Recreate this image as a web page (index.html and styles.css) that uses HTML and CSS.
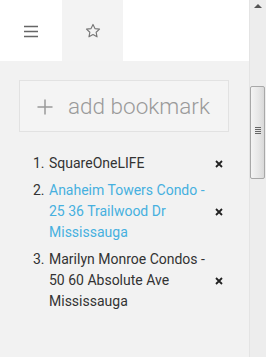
FILE: index.html
```html
<!DOCTYPE html>
<html>
<head>
<meta charset="utf-8">
<link rel="stylesheet" href="styles.css">
</head>
<body>
<div class="frame">
  <div class="main">
    <div class="tabs">
      <div class="tab tab-menu">
        <svg width="16" height="14" viewBox="0 0 16 14"><path d="M1 2.5H15M1 7.5H15M1 12.5H15" stroke="#666" stroke-width="1.6" fill="none"/></svg>
      </div>
      <div class="tab tab-star">
        <svg width="18" height="18" viewBox="0 0 24 24"><path d="M12 3.2l2.6 5.6 6.1.7-4.5 4.2 1.2 6.1L12 16.8l-5.4 3 1.2-6.1-4.5-4.2 6.1-.7z" stroke="#777" stroke-width="1.5" fill="none" stroke-linejoin="round"/></svg>
      </div>
      <div class="tab-rest"></div>
    </div>
    <div class="content">
      <div class="add-btn"><span class="plus"><svg width="16" height="16" viewBox="0 0 16 16"><path d="M8 0.5V15.5M0.5 8H15.5" stroke="#999" stroke-width="1.5"/></svg></span><span class="add-label">add bookmark</span></div>
      <ol class="list">
        <li class="item"><span class="num">1.</span><span class="title">SquareOneLIFE</span><span class="del"><svg width="8" height="8" viewBox="0 0 8 8"><path d="M1 1L7 7M7 1L1 7" stroke="#222" stroke-width="1.8"/></svg></span></li>
        <li class="item"><span class="num">2.</span><span class="title link">Anaheim Towers Condo - 25 36 Trailwood Dr Mississauga</span><span class="del"><svg width="8" height="8" viewBox="0 0 8 8"><path d="M1 1L7 7M7 1L1 7" stroke="#222" stroke-width="1.8"/></svg></span></li>
        <li class="item"><span class="num">3.</span><span class="title">Marilyn Monroe Condos - 50 60 Absolute Ave Mississauga</span><span class="del"><svg width="8" height="8" viewBox="0 0 8 8"><path d="M1 1L7 7M7 1L1 7" stroke="#222" stroke-width="1.8"/></svg></span></li>
      </ol>
    </div>
  </div>
  <div class="scrollbar">
    <div class="arrow"></div>
    <div class="thumb"><div class="grip"></div></div>
  </div>
</div>
</body>
</html>
```
FILE: styles.css
```css
html, body {
  margin: 0;
  padding: 0;
  height: 100%;
}
body {
  font-family: Roboto, "Liberation Sans", sans-serif;
  background: #f2f2f2;
  overflow: hidden;
}
.frame {
  display: flex;
  height: 357px;
}
.main {
  width: 249px;
  display: flex;
  flex-direction: column;
}
.tabs {
  display: flex;
  height: 61px;
  flex: none;
}
.tab {
  display: flex;
  align-items: center;
  justify-content: center;
}
.tab-menu {
  width: 62px;
  background: #fff;
  padding-top: 1px;
}
.tab-star {
  width: 61px;
  background: #f3f3f3;
}
.tab-rest {
  flex: 1;
  background: #fff;
}
.content {
  flex: 1;
  background: #f2f2f2;
  padding: 19px 20px 0 19px;
}
.add-btn {
  height: 50px;
  border: 1px solid #e2e2e2;
  background: #f4f4f4;
  display: flex;
  align-items: center;
  padding-left: 17px;
  color: #9a9a9a;
  font-weight: 300;
}
.plus {
  width: 31px;
  display: flex;
  margin-top: 1px;
}
.add-label {
  font-size: 22.5px;
}
.list {
  list-style: none;
  margin: 21px 0 0;
  padding: 0;
  font-size: 14px;
  color: #333;
}
.item {
  display: flex;
  align-items: center;
  line-height: 21px;
  margin-bottom: 6px;
}
.num {
  width: 16px;
  padding-left: 14px;
  align-self: flex-start;
}
.title {
  width: 160px;
}
.link {
  color: #46b0df;
}
.del {
  margin-left: 6px;
  display: flex;
}
.scrollbar {
  width: 17px;
  background: #ededed;
  border-left: 1px solid #e4e4e4;
  box-sizing: border-box;
  position: relative;
}
.arrow {
  position: absolute;
  left: 4px;
  top: 4px;
  width: 0;
  height: 0;
  border-left: 4px solid transparent;
  border-right: 4px solid transparent;
  border-bottom: 4px solid #555;
}
.thumb {
  position: absolute;
  left: 0;
  top: 86px;
  width: 15px;
  height: 93px;
  border: 1px solid #a8a8a8;
  border-radius: 2px;
  box-sizing: border-box;
  background: linear-gradient(to right, #f4f4f4, #e6e6e6 60%, #d9d9d9);
}
.grip {
  position: absolute;
  left: 4px;
  top: 40px;
  width: 6px;
  height: 7px;
  background: repeating-linear-gradient(to bottom, #666 0 1px, transparent 1px 2px);
}
```
